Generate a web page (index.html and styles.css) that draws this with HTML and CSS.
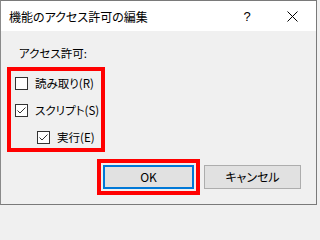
FILE: index.html
```html
<!DOCTYPE html>
<html lang="ja">
<head>
<meta charset="utf-8">
<title>機能のアクセス許可の編集</title>
<link rel="stylesheet" href="styles.css">
</head>
<body>
<div class="window">
  <div class="titlebar">
    <span class="title">機能のアクセス許可の編集</span>
    <span class="help">?</span>
    <span class="close">
      <svg width="11" height="11" viewBox="0 0 11 11"><path d="M0.5 0.5 L10.5 10.5 M10.5 0.5 L0.5 10.5" stroke="#000" stroke-width="1" fill="none"/></svg>
    </span>
  </div>
  <div class="content">
    <div class="group-label">アクセス許可:</div>
    <div class="highlight perms">
      <div class="row">
        <span class="checkbox"></span>
        <span class="label">読み取り(R)</span>
      </div>
      <div class="row">
        <span class="checkbox"><svg width="11" height="11" viewBox="0 0 11 11"><polyline points="1.5,5.5 4,8 9.5,2.5" fill="none" stroke="#333" stroke-width="1"/></svg></span>
        <span class="label">スクリプト(S)</span>
      </div>
      <div class="row indent">
        <span class="checkbox"><svg width="11" height="11" viewBox="0 0 11 11"><polyline points="1.5,5.5 4,8 9.5,2.5" fill="none" stroke="#333" stroke-width="1"/></svg></span>
        <span class="label">実行(E)</span>
      </div>
    </div>
    <div class="buttons">
      <div class="highlight okwrap">
        <button class="btn btn-ok">OK</button>
      </div>
      <button class="btn btn-cancel">キャンセル</button>
    </div>
  </div>
</div>
</body>
</html>
```
FILE: styles.css
```css
* { box-sizing: border-box; }
html, body {
  margin: 0;
  padding: 0;
  background: #f0f0f0;
}
body {
  font-family: "Noto Sans CJK JP", "Noto Sans", sans-serif;
  font-size: 11.5px;
  font-feature-settings: "palt";
  color: #000;
}
.window {
  width: 317px;
  height: 205px;
  border: 1px solid #7a7a7a;
  border-left-color: #8a8a8a;
  background: #f0f0f0;
  display: flex;
  flex-direction: column;
}
.titlebar {
  height: 30px;
  background: #fff;
  display: flex;
  align-items: center;
  padding-left: 8px;
  flex: none;
}
.title {
  font-size: 12px;
  line-height: 16px;
  flex: 1;
  padding-top: 1px;
}
.help {
  font-family: "Liberation Sans", sans-serif;
  font-size: 13px;
  width: 12px;
  text-align: center;
  margin-right: 34px;
  padding-top: 1px;
}
.close {
  width: 11px;
  height: 11px;
  margin-right: 18px;
  display: flex;
}
.content {
  flex: 1;
  padding: 14px 15px 0 6px;
  display: flex;
  flex-direction: column;
}
.group-label {
  line-height: 16px;
  height: 16px;
  margin-left: 12px;
}
.highlight {
  border: 4px solid #f00;
}
.perms {
  width: 98px;
  height: 85px;
  margin-top: 6px;
  padding: 6px 0 4px 4px;
  display: flex;
  flex-direction: column;
  gap: 14px;
}
.row {
  display: flex;
  align-items: center;
  height: 13px;
  gap: 7px;
}
.row.indent {
  padding-left: 22px;
}
.checkbox {
  width: 13px;
  height: 13px;
  border: 1px solid #333;
  background: #fff;
  flex: none;
  display: flex;
}
.label {
  line-height: 13px;
  white-space: nowrap;
}
.buttons {
  margin-top: 7px;
  display: flex;
  justify-content: flex-end;
  gap: 4px;
  align-items: flex-start;
}
.okwrap {
  padding: 2px;
  display: flex;
}
.btn {
  font-family: "Noto Sans CJK JP", "Noto Sans", sans-serif;
  font-feature-settings: "palt";
  font-size: 12px;
  height: 24px;
  background: #e1e1e1;
  color: #000;
  margin: 0;
  padding: 0;
  line-height: 20px;
}
.btn-ok {
  width: 91px;
  border: 2px solid #0078d7;
}
.btn-cancel {
  width: 97px;
  margin-top: 6px;
  border: 1px solid #adadad;
}
```
